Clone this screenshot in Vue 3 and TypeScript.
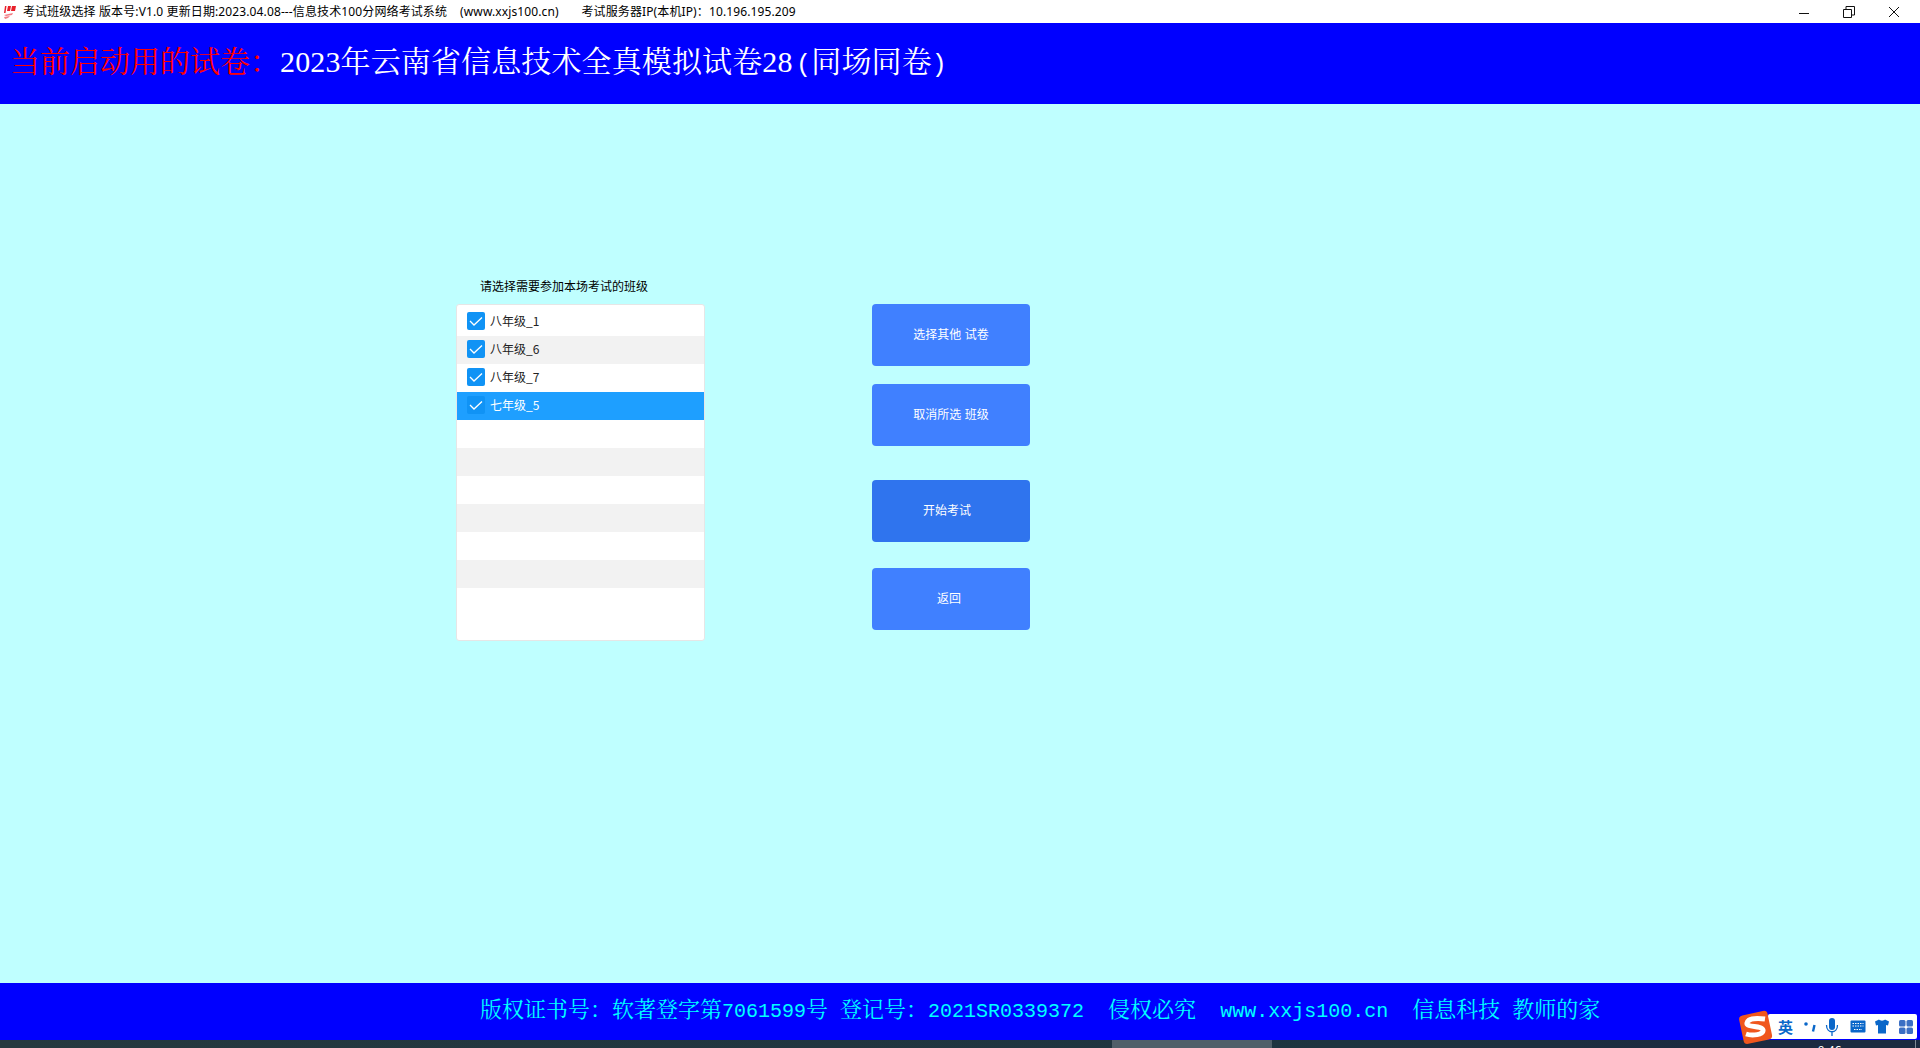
<script setup lang="ts">
const rows = ['八年级_1', '八年级_6', '八年级_7', '七年级_5', '', '', '', '', '', '', '']
</script>

<template>
  <div class="page">
    <header class="titlebar">
      <svg class="logo" width="14" height="16" viewBox="0 0 14 16">
        <path d="M2 2 3.500 2 2.500 9 1 9ZM5 2 8 2 7 7 4 7ZM9 2 13 2 12 7 8 7Z" fill="#e8202a" />
        <path d="M1 11 10 9 9 11 3 12ZM1 13 7 12 5 14 2 15Z" fill="#f27d84" />
      </svg>
      <span class="wintitle">考试班级选择 版本号:V1.0 更新日期:2023.04.08---信息技术100分网络考试系统 &nbsp;&nbsp; (www.xxjs100.cn) &nbsp;&nbsp;&nbsp;&nbsp;&nbsp; 考试服务器IP(本机IP)：10.196.195.209</span>
      <div class="controls">
        <svg width="12" height="12" viewBox="0 0 12 12"><path d="M1 7.500H11" stroke="#111" fill="none" /></svg>
        <svg width="12" height="12" viewBox="0 0 12 12"><path d="M.5 3.500H8.500V11.500H.5ZM3 3V.5H11.500V9H9" stroke="#111" fill="none" /></svg>
        <svg width="12" height="12" viewBox="0 0 12 12"><path d="M1 1 11 11M11 1 1 11" stroke="#111" fill="none" /></svg>
      </div>
    </header>

    <div class="banner">
      <span class="red">当前启动用的试卷：</span><span class="white">2023年云南省信息技术全真模拟试卷28<i>(</i>同场同卷<i>)</i></span>
    </div>

    <main class="main">
      <section class="picker">
        <div class="picker-title">请选择需要参加本场考试的班级</div>
        <div class="list">
          <div
            v-for="(r, i) in rows"
            :key="i"
            class="row"
            :class="{ zebra: i % 2 === 1, selected: i === 3 }"
          >
            <template v-if="r">
              <span class="check">
                <svg width="18" height="18" viewBox="0 0 18 18"><path d="M3 9 7 13 15 5.500" stroke="#fff" stroke-width="1.300" fill="none" /></svg>
              </span>
              <span class="label">{{ r }}</span>
            </template>
          </div>
        </div>
      </section>
      <section class="actions">
        <button class="btn b1">选择其他 试卷</button>
        <button class="btn b2">取消所选 班级</button>
        <button class="btn b3 dark">开始考试</button>
        <button class="btn b4">返回</button>
      </section>
    </main>

    <footer class="footer">
      版权证书号：软著登字第<i>7061599</i>号<i>&nbsp;</i>登记号：<i>2021SR0339372&nbsp;&nbsp;</i>侵权必究<i>&nbsp;&nbsp;www.xxjs100.cn&nbsp;&nbsp;</i>信息科技<i>&nbsp;</i>教师的家
    </footer>

    <div class="taskbar">
      <div class="task-active"></div>
      <span class="clock">9:46</span>
      <div class="task-line"></div>
    </div>

    <div class="ime">
      <svg class="ime-s" width="36" height="38" viewBox="0 0 36 38">
        <rect x="3" y="4" width="29" height="29" rx="4" transform="rotate(-12 17 18)" fill="#f0561d" />
        <path d="M27 10C20 9 10 9 9 14 8 19 24 16 25 21 26 26 14 27 8 25" stroke="#fff" stroke-width="5" fill="none" />
      </svg>
      <span class="ime-text">英</span>
      <svg class="ime-punct" width="14" height="14" viewBox="0 0 14 14"><circle cx="3" cy="4" r="1.800" fill="#0a67c9" /><path d="M11.500 5 10 11.500" stroke="#0a67c9" stroke-width="2.400" /></svg>
      <svg class="ime-mic" width="14" height="20" viewBox="0 0 14 20"><rect x="4" y="1" width="6" height="12" rx="3" fill="#0a67c9" /><path d="M1.500 8C1.500 17 12.500 17 12.500 8M7 15V19" stroke="#0a67c9" stroke-width="1.300" fill="none" /></svg>
      <svg class="ime-kbd" width="16" height="13" viewBox="0 0 16 13"><rect x=".5" y=".5" width="15" height="12" rx="1" fill="#0a67c9" /><path d="M2.500 3.500H13.500M2.500 6H13.500M4 9.500H12" stroke="#fff" stroke-dasharray="1.500 1" /></svg>
      <svg class="ime-shirt" width="16" height="15" viewBox="0 0 16 15"><path d="M1 2.500 5 .5C6 2 10 2 11 .5L15 2.500 14 6.500 12 6V14.500H4V6L2 6.500Z" fill="#0a67c9" /></svg>
      <svg class="ime-grid" width="14" height="14" viewBox="0 0 14 14" fill="#3b6fc4"><rect width="6.500" height="6.500" rx="1.500" /><rect x="7.500" width="6.500" height="6.500" rx="1.500" /><rect y="7.500" width="6.500" height="6.500" rx="1.500" /><rect x="7.500" y="7.500" width="6.500" height="6.500" rx="1.500" /></svg>
    </div>
  </div>
</template>

<style>
html, body { margin: 0; overflow: hidden; }
</style>

<style scoped>
.page {
  position: relative;
  width: 1920px;
  height: 1048px;
  overflow: hidden;
  display: flex;
  flex-direction: column;
  font-family: "Noto Sans CJK SC", sans-serif;
  background: #bfffff;
}
.titlebar {
  height: 23px;
  flex: none;
  background: #fff;
  display: flex;
  align-items: center;
  padding-left: 3px;
  font-size: 12px;
  color: #000;
}
.logo { width: 14px; margin-right: 6px; }
.wintitle {
  white-space: nowrap;
  font-family: "Noto Sans", "Noto Sans CJK SC", sans-serif;
  letter-spacing: 0.12px;
  position: relative;
  top: -1px;
}
.controls { margin-left: auto; display: flex; gap: 33px; padding-right: 20px; }
.banner {
  height: 81px;
  flex: none;
  background: #0000ff;
  display: flex;
  align-items: center;
  padding-left: 10px;
  padding-bottom: 10px;
  box-sizing: border-box;
  font-size: 30px;
  font-family: "Liberation Serif", "Noto Serif CJK SC", "Noto Sans CJK SC", serif;
  white-space: nowrap;
}
.red { color: #ff0000; width: 270px; }
.white { color: #fff; letter-spacing: 0.13px; }
.white i {
  font-style: normal;
  font-family: "Liberation Mono", monospace;
  font-size: 25px;
}
.white i:first-of-type { margin-left: 3.5px; }
.main {
  flex: 1;
  display: flex;
  align-items: flex-start;
  padding: 170px 0 0 456px;
}
.picker { width: 249px; }
.picker-title {
  height: 30px;
  line-height: 23px;
  padding-left: 24px;
  font-size: 12px;
  color: #000;
}
.list {
  box-sizing: border-box;
  height: 337px;
  background: #fff;
  border: 1px solid #e6e6e6;
  border-radius: 3px;
  padding-top: 3px;
  overflow: hidden;
}
.row {
  height: 28px;
  display: flex;
  align-items: center;
  padding-left: 10px;
  padding-bottom: 2px;
  box-sizing: border-box;
  font-size: 12px;
  color: #222;
}
.zebra { background: #f2f2f2; }
.selected { background: #1e9fff; color: #fff; }
.check {
  width: 18px;
  height: 18px;
  border-radius: 2px;
  background: #1093f5;
  display: flex;
  margin-right: 5px;
}
.label { white-space: nowrap; margin-top: -2px; }
.actions {
  display: flex;
  flex-direction: column;
  margin: 30px 0 0 167px;
}
.btn {
  width: 158px;
  height: 62px;
  border: 0;
  border-radius: 4px;
  padding: 0 0 3px;
  background: #4080ff;
  color: #fff;
  font: 12px "Noto Sans CJK SC", sans-serif;
  word-spacing: 1px;
}
.b2 { margin-top: 18px; }
.b3 { margin-top: 34px; padding-right: 8px; }
.b4 { margin-top: 26px; padding-right: 4px; }
.dark { background: #2f74ee; }
.footer {
  height: 57px;
  flex: none;
  background: #0000ff;
  color: #00ffff;
  font-family: "Noto Serif CJK SC", "Noto Sans CJK SC", serif;
  font-size: 22px;
  line-height: 50px;
  padding-left: 480px;
  white-space: nowrap;
}
.footer i {
  font-style: normal;
  font-family: "Liberation Mono", monospace;
  font-size: 20px;
}
.taskbar {
  height: 8px;
  flex: none;
  position: relative;
  background: linear-gradient(90deg, #25393f 0, #1d3440 70%, #1b2a40 90%);
  overflow: hidden;
}
.task-active {
  position: absolute;
  left: 1112px;
  top: 0;
  width: 160px;
  height: 8px;
  background: #4f5f69;
}
.clock {
  position: absolute;
  left: 1818px;
  top: 3px;
  font-size: 12px;
  line-height: 14px;
  color: #fff;
}
.task-line {
  position: absolute;
  left: 1915px;
  top: 0;
  width: 1px;
  height: 8px;
  background: #7f8a96;
}
.ime {
  position: absolute;
  left: 1768px;
  top: 1014px;
  width: 149px;
  height: 25px;
  box-sizing: border-box;
  background: #fff;
  border-radius: 2px;
  display: flex;
  align-items: center;
  padding-left: 10px;
}
.ime-s { position: absolute; left: -30px; top: -5px; }
.ime-text { font-size: 15px; font-weight: 700; color: #0a67c9; width: 15px; line-height: 15px; }
.ime-punct { margin-left: 10px; }
.ime-mic { margin-left: 8px; }
.ime-kbd { margin-left: 11px; }
.ime-shirt { margin-left: 8px; }
.ime-grid { margin-left: 9px; }
</style>
